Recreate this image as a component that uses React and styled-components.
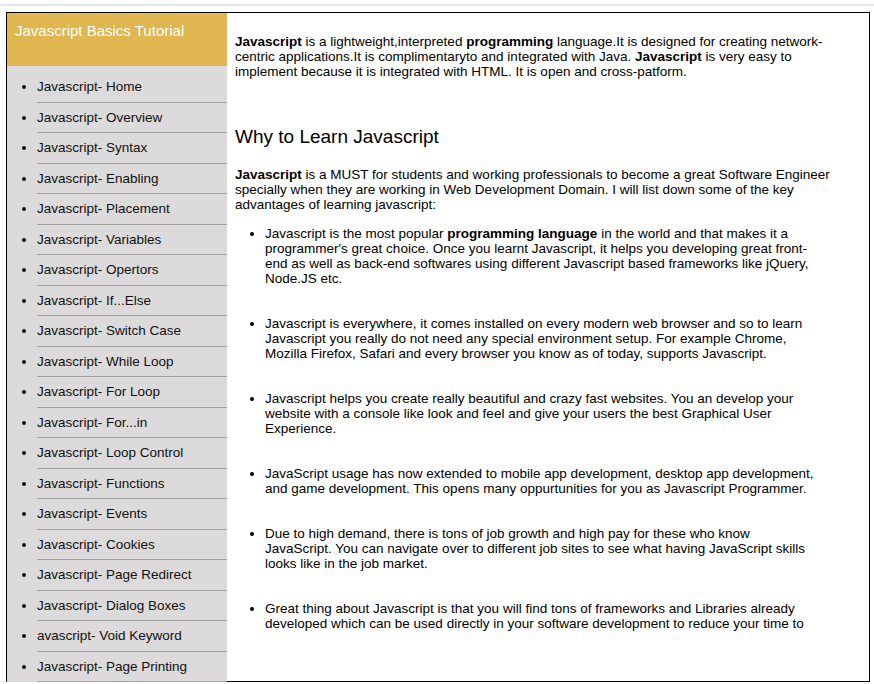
import React from "react";
import styled, { createGlobalStyle } from "styled-components";

const GlobalStyle = createGlobalStyle`
  body {
    margin: 0;
    background: #fff;
    font-family: "Liberation Sans", Arial, sans-serif;
    color: #000;
  }
`;

const TopRule = styled.div`
  margin-top: 4px;
  height: 2px;
  background: #e6e6e6;
`;

const Frame = styled.div`
  margin: 6px 4px 0 6px;
  height: 668px;
  border: 1px solid #000;
  display: flex;
`;

const Sidebar = styled.aside`
  width: 220px;
  flex-shrink: 0;
  align-self: flex-start;
  background: #dcdada;
  padding-bottom: 12px;
`;

const SideTitle = styled.div`
  height: 53px;
  box-sizing: border-box;
  padding: 9px 8px;
  background: #dfb64f;
  color: #fff;
  font-size: 15px;
`;

const NavList = styled.ul`
  margin: 6px 0 0;
  padding-left: 30px;
`;

const NavItem = styled.li`
  font-size: 13.5px;
  line-height: 16px;
  padding: 7px 0 6.5px;
  border-bottom: 1px solid #a3a3a3;
  color: #111;
`;

const Content = styled.main`
  flex: 1;
  padding: 0 30px 0 8px;
  font-size: 13.5px;
  line-height: 15px;
  overflow: hidden;
`;

const Para = styled.p`
  margin: ${({ $top }) => $top || 0}px 0 ${({ $bottom }) => $bottom || 0}px;
`;

const Heading = styled.h2`
  margin: 47px 0 19px;
  font-size: 19px;
  font-weight: normal;
  line-height: 22px;
`;

const PointList = styled.ul`
  margin: 0;
  padding: 0 19px 0 30px;
`;

const Point = styled.li`
  margin-bottom: 30px;
`;

const navItems = [
  "Javascript- Home",
  "Javascript- Overview",
  "Javascript- Syntax",
  "Javascript- Enabling",
  "Javascript- Placement",
  "Javascript- Variables",
  "Javascript- Opertors",
  "Javascript- If...Else",
  "Javascript- Switch Case",
  "Javascript- While Loop",
  "Javascript- For Loop",
  "Javascript- For...in",
  "Javascript- Loop Control",
  "Javascript- Functions",
  "Javascript- Events",
  "Javascript- Cookies",
  "Javascript- Page Redirect",
  "Javascript- Dialog Boxes",
  "avascript- Void Keyword",
  "Javascript- Page Printing",
];

export default function App() {
  return (
    <>
      <GlobalStyle />
      <TopRule />
      <Frame>
        <Sidebar>
          <SideTitle>Javascript Basics Tutorial</SideTitle>
          <NavList>
            {navItems.map((item) => (
              <NavItem key={item}>{item}</NavItem>
            ))}
          </NavList>
        </Sidebar>
        <Content>
          <Para $top={21}>
            <b>Javascript</b> is a lightweight,interpreted <b>programming</b> language.It is
            designed for creating network-centric applications.It is complimentaryto and
            integrated with Java. <b>Javascript</b> is very easy to implement because it is
            integrated with HTML. It is open and cross-patform.
          </Para>
          <Heading>Why to Learn Javascript</Heading>
          <Para $bottom={14}>
            <b>Javascript</b> is a MUST for students and working professionals to become a great
            Software Engineer specially when they are working in Web Development Domain. I will
            list down some of the key advantages of learning javascript:
          </Para>
          <PointList>
            <Point>
              Javascript is the most popular <b>programming language</b> in the world and that
              makes it a programmer's great choice. Once you learnt Javascript, it helps you
              developing great front-end as well as back-end softwares using different Javascript
              based frameworks like jQuery, Node.JS etc.
            </Point>
            <Point>
              Javascript is everywhere, it comes installed on every modern web browser and so to
              learn Javascript you really do not need any special environment setup. For example
              Chrome, Mozilla Firefox, Safari and every browser you know as of today, supports
              Javascript.
            </Point>
            <Point>
              Javascript helps you create really beautiful and crazy fast websites. You an develop
              your website with a console like look and feel and give your users the best
              Graphical User Experience.
            </Point>
            <Point>
              JavaScript usage has now extended to mobile app development, desktop app
              development, and game development. This opens many oppurtunities for you as
              Javascript Programmer.
            </Point>
            <Point>
              Due to high demand, there is tons of job growth and high pay for these who know
              JavaScript. You can navigate over to different job sites to see what having
              JavaScript skills looks like in the job market.
            </Point>
            <Point>
              Great thing about Javascript is that you will find tons of frameworks and Libraries
              already developed which can be used directly in your software development to reduce
              your time to
            </Point>
          </PointList>
        </Content>
      </Frame>
    </>
  );
}
